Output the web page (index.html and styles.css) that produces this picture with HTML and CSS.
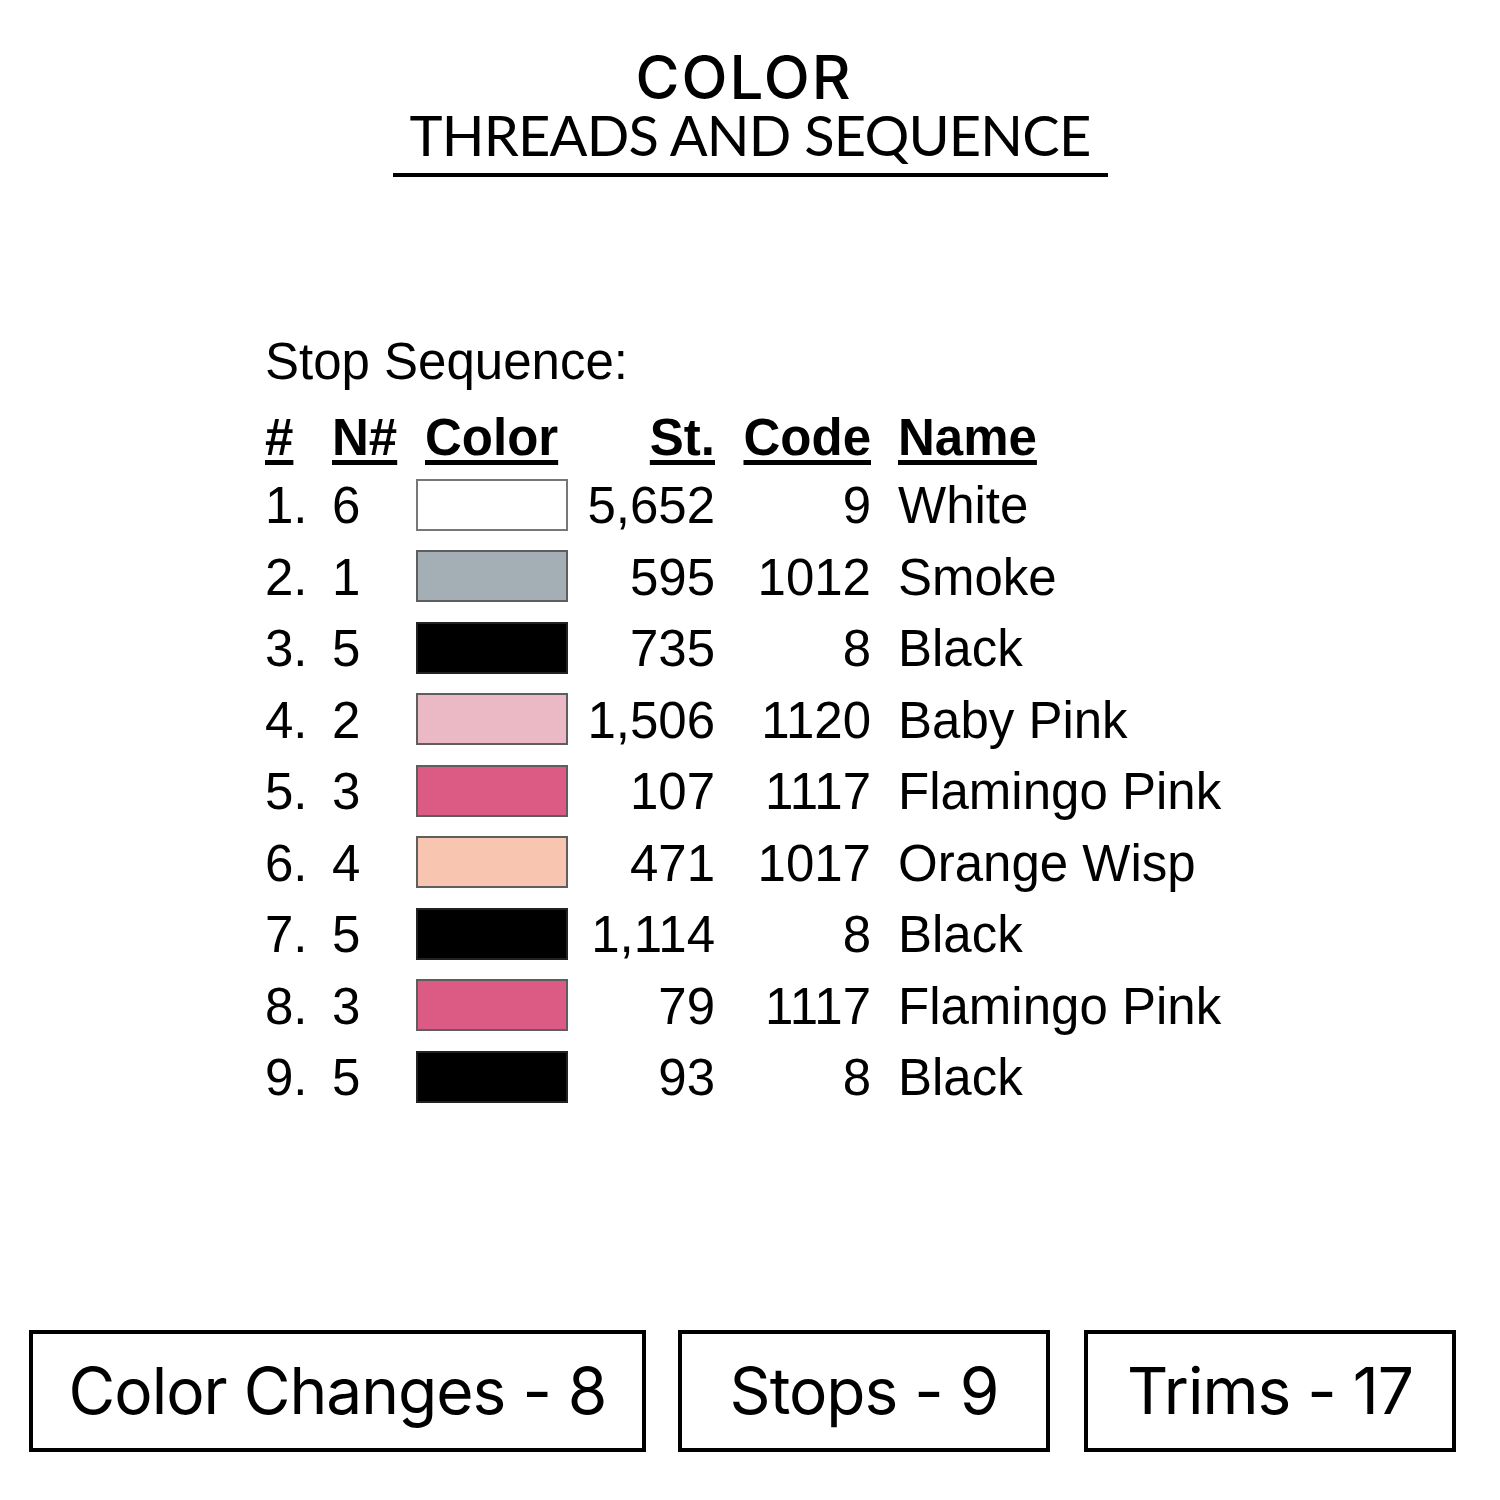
FILE: index.html
```html
<!DOCTYPE html>
<html>
<head>
<meta charset="utf-8">
<link rel="stylesheet" href="styles.css">
</head>
<body>
<div class="page">
  <header class="head">
    <div class="head-title">COLOR</div>
    <div class="head-sub">THREADS AND SEQUENCE</div>
  </header>

  <section class="seq">
    <div class="seq-title">Stop Sequence:</div>
    <div class="seq-grid">
      <div class="hd">#</div>
      <div class="hd">N#</div>
      <div class="hd hd-color">Color</div>
      <div class="hd num">St.</div>
      <div class="hd num">Code</div>
      <div class="hd name">Name</div>

      <div class="c">1.</div><div class="c">6</div><div class="c"><span class="sw sw-white"></span></div><div class="c num">5,652</div><div class="c num">9</div><div class="c name">White</div>
      <div class="c">2.</div><div class="c">1</div><div class="c"><span class="sw sw-smoke"></span></div><div class="c num">595</div><div class="c num">1012</div><div class="c name">Smoke</div>
      <div class="c">3.</div><div class="c">5</div><div class="c"><span class="sw sw-black"></span></div><div class="c num">735</div><div class="c num">8</div><div class="c name">Black</div>
      <div class="c">4.</div><div class="c">2</div><div class="c"><span class="sw sw-baby"></span></div><div class="c num">1,506</div><div class="c num">1120</div><div class="c name">Baby Pink</div>
      <div class="c">5.</div><div class="c">3</div><div class="c"><span class="sw sw-flamingo"></span></div><div class="c num">107</div><div class="c num">1117</div><div class="c name">Flamingo Pink</div>
      <div class="c">6.</div><div class="c">4</div><div class="c"><span class="sw sw-orange"></span></div><div class="c num">471</div><div class="c num">1017</div><div class="c name">Orange Wisp</div>
      <div class="c">7.</div><div class="c">5</div><div class="c"><span class="sw sw-black"></span></div><div class="c num">1,114</div><div class="c num">8</div><div class="c name">Black</div>
      <div class="c">8.</div><div class="c">3</div><div class="c"><span class="sw sw-flamingo"></span></div><div class="c num">79</div><div class="c num">1117</div><div class="c name">Flamingo Pink</div>
      <div class="c">9.</div><div class="c">5</div><div class="c"><span class="sw sw-black"></span></div><div class="c num">93</div><div class="c num">8</div><div class="c name">Black</div>
    </div>
  </section>

  <footer class="stats">
    <div class="stat stat-wide">Color Changes - 8</div>
    <div class="stat stat-mid">Stops - 9</div>
    <div class="stat stat-last">Trims - 17</div>
  </footer>
</div>
</body>
</html>
```

FILE: styles.css
```css
html, body {
  margin: 0;
  padding: 0;
  background: #ffffff;
}

.page {
  width: 1500px;
  height: 1500px;
  color: #000;
}

.head {
  width: 715px;
  margin: 0 auto;
  padding-top: 47px;
  padding-bottom: 10px;
  border-bottom: 4px solid #000;
  text-align: center;
  font-family: Inter, "Noto Sans", sans-serif;
}

.head-title {
  font-size: 60px;
  line-height: 60px;
  font-weight: 500;
  letter-spacing: 2px;
  margin-right: 12px;
}

.head-sub {
  font-family: Lato, Inter, sans-serif;
  font-size: 56px;
  line-height: 56px;
  font-weight: 400;
  letter-spacing: -0.8px;
  white-space: nowrap;
}

.seq {
  padding-left: 265px;
  margin-top: 149px;
  font-family: "Liberation Sans", Arial, sans-serif;
  font-size: 51px;
}

.seq-title {
  line-height: 72px;
}

.seq-grid {
  margin-top: 8px;
  display: grid;
  grid-template-columns: 67px 84px 152px 147px 156px auto;
  grid-template-rows: 64px;
  grid-auto-rows: 71.5px;
  align-items: center;
}

.hd {
  font-weight: bold;
  line-height: 64px;
  text-decoration: underline;
  text-decoration-thickness: 5px;
  text-underline-offset: 5px;
  justify-self: start;
}

.hd-color {
  padding-left: 9px;
}

.c {
  line-height: 71.5px;
  display: flex;
  align-items: center;
  height: 71.5px;
}

.num {
  justify-self: end;
  justify-content: flex-end;
}

.name {
  padding-left: 27px;
}

.sw {
  display: block;
  width: 152px;
  height: 52px;
  box-sizing: border-box;
  border: 2px solid #5e5e5e;
  margin-top: -2px;
}

.sw-white { background: #ffffff; border-color: #777; }
.sw-smoke { background: #a3afb5; }
.sw-black { background: #000000; border-color: #222; }
.sw-baby { background: #ebb8c6; }
.sw-flamingo { background: #dc5b85; }
.sw-orange { background: #f8c6b0; }

.stats {
  margin-top: 216px;
  display: flex;
  padding-left: 29px;
  font-family: Inter, "Noto Sans", sans-serif;
  font-size: 64px;
  line-height: 64px;
  letter-spacing: -1px;
}

.stat {
  height: 122px;
  box-sizing: border-box;
  border: 4px solid #000;
  display: flex;
  align-items: center;
  justify-content: center;
}

.stat-wide { width: 617px; }
.stat-mid { width: 372px; margin-left: 32px; }
.stat-last { width: 372px; margin-left: 34px; }
```
